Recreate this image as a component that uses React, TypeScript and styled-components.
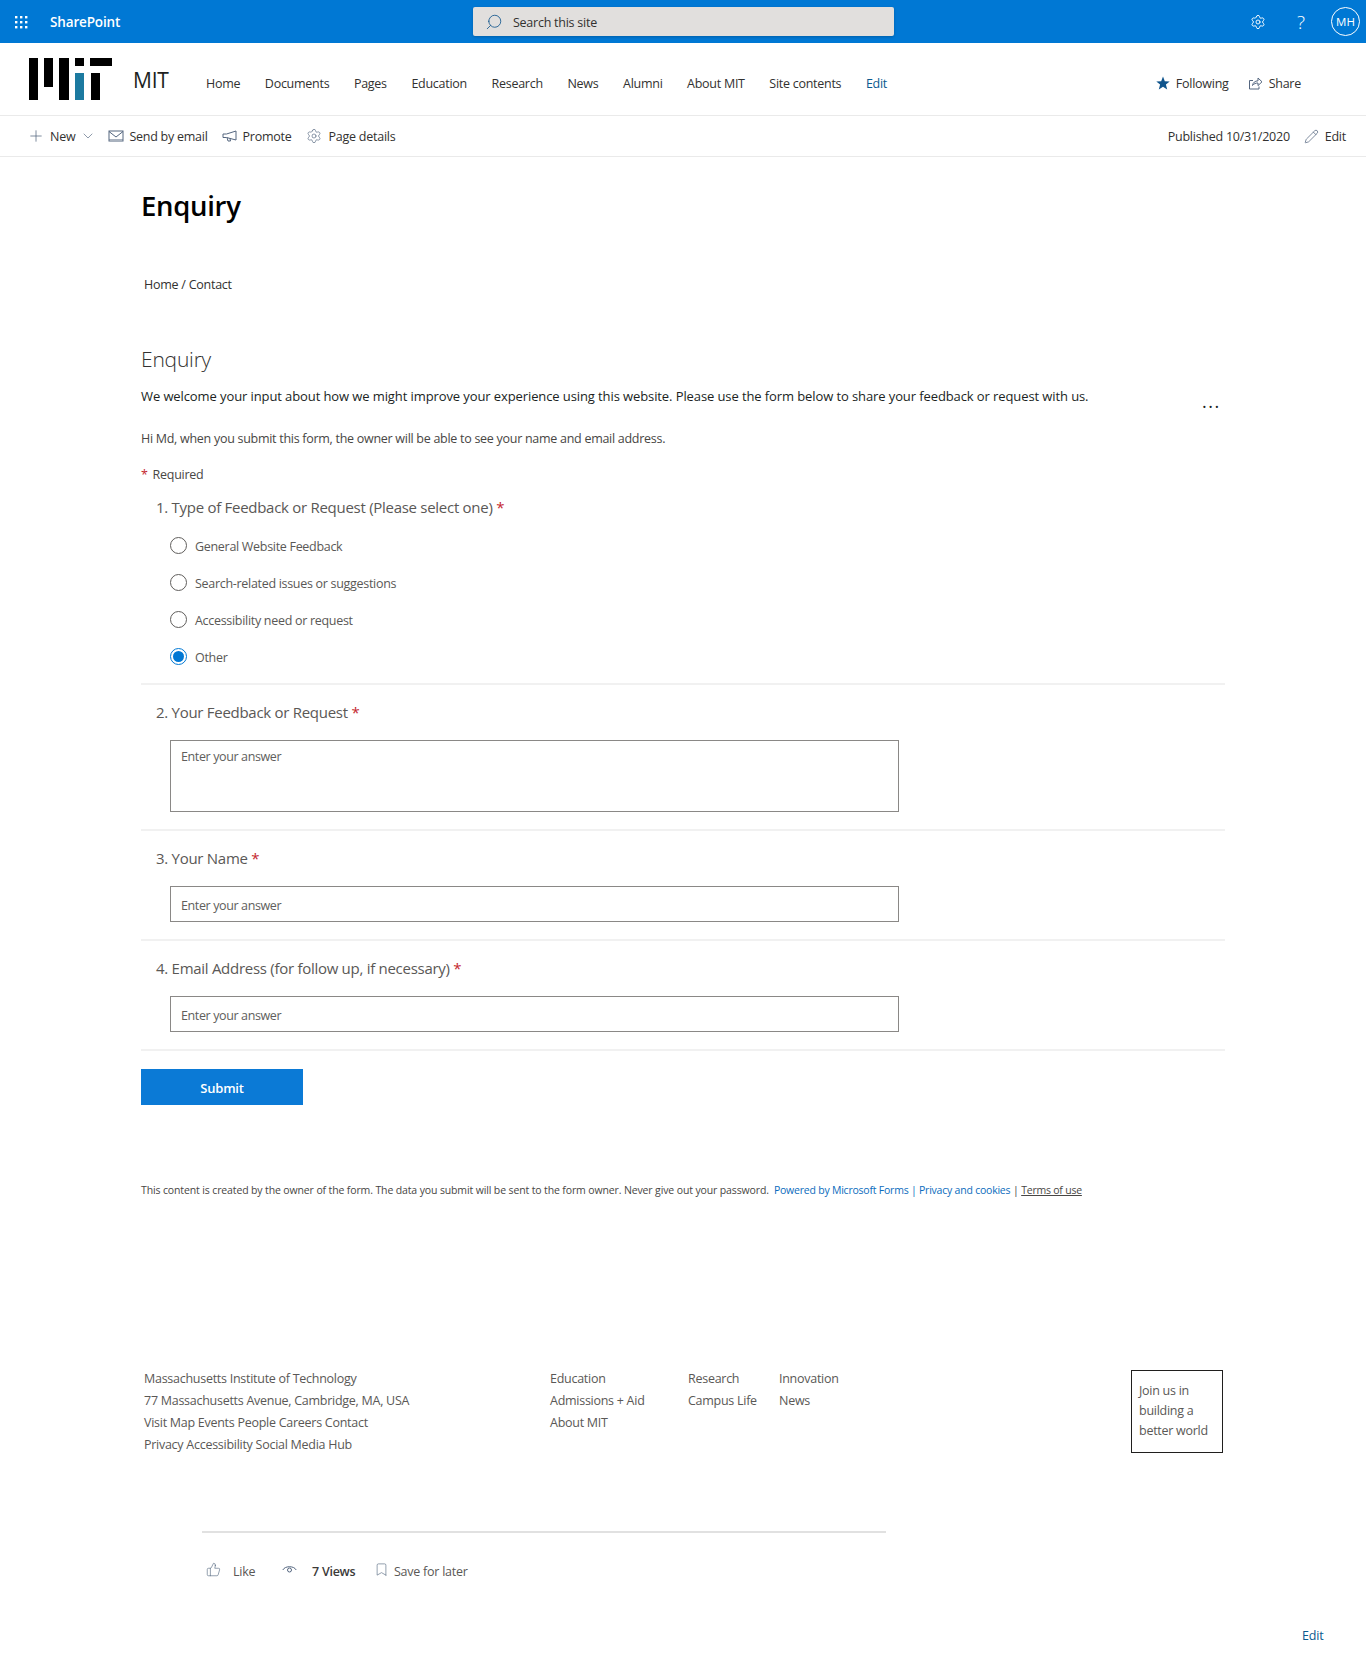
import React from "react";
import styled, { createGlobalStyle } from "styled-components";
import { Bookmark, ChevronDown, Pencil, Plus, Search, Settings, ThumbsUp } from "lucide-react";

const GlobalStyle = createGlobalStyle`
  html, body { margin: 0; padding: 0; background: #fff; }
  body { font-family: "Open Sans", "Noto Sans", sans-serif; color: #323130; font-size: 13px; }
  * { box-sizing: border-box; }
`;

const Page = styled.div`
  width: 1366px;
  height: 1673px;
  overflow: hidden;
  position: relative;
`;

const TopBar = styled.div`
  height: 43px;
  background: #0078d4;
  display: grid;
  grid-template-columns: 473px 421px 1fr;
  align-items: center;
  color: #fff;
`;

const Brand = styled.div`
  display: flex;
  align-items: center;
  padding-left: 14px;
  gap: 22px;
  font-weight: 600;
  font-size: 13.5px;
  letter-spacing: -0.15px;
`;

const SearchBox = styled.div`
  height: 29px;
  background: #e1dfdd;
  border-radius: 2px;
  box-shadow: 0 1px 3px rgba(0, 0, 0, 0.2);
  display: flex;
  align-items: center;
  padding: 1px 0 0 12px;
  gap: 10px;
  color: #323130;
  font-size: 12.5px;
  letter-spacing: -0.25px;
  svg { transform: scaleX(-1); color: #0f548c; }
`;

const TopIcons = styled.div`
  display: flex;
  justify-content: flex-end;
  align-items: center;
  padding-right: 6px;
`;

const HelpMark = styled.span`
  font-size: 19px;
  font-weight: 300;
  margin-left: 31px;
  width: 34px;
`;

const Avatar = styled.div`
  width: 29px;
  height: 29px;
  border: 1px solid #fff;
  border-radius: 50%;
  display: flex;
  align-items: center;
  justify-content: center;
  font-size: 11.5px;
`;

const SiteHeader = styled.div`
  height: 73px;
  border-bottom: 1px solid #eaeaea;
  display: flex;
  padding-left: 29px;
  padding-right: 65px;
`;

const LogoWrap = styled.div`
  padding-top: 15px;
`;

const SiteName = styled.div`
  font-size: 21px;
  color: #201f1e;
  margin-left: 21px;
  padding-top: 23px;
  width: 73px;
  letter-spacing: -0.2px;
`;

const Nav = styled.nav`
  display: flex;
  gap: 24.6px;
  padding-top: 31px;
  flex: 1;
  font-size: 12.5px;
  letter-spacing: -0.27px;
`;

const NavLink = styled.span<{ $accent?: boolean }>`
  color: ${(p) => (p.$accent ? "#0b5a8f" : "#323130")};
  line-height: 20px;
  white-space: nowrap;
`;

const HeaderActions = styled.div`
  display: flex;
  gap: 19px;
  padding-top: 30px;
  font-size: 12.5px;
  letter-spacing: -0.25px;
`;

const Action = styled.span`
  display: flex;
  align-items: center;
  gap: 6px;
  height: 20px;
  white-space: nowrap;
  svg { color: #0f548c; }
`;

const CommandBar = styled.div`
  height: 41px;
  border-bottom: 1px solid #eaeaea;
  display: flex;
  align-items: center;
  justify-content: space-between;
  padding: 0 20px 0 27px;
  font-size: 12.5px;
  letter-spacing: -0.25px;
`;

const CommandGroup = styled.div`
  display: flex;
  align-items: center;
  gap: 14px;
`;

const Command = styled.span<{ $gap?: number }>`
  display: flex;
  align-items: center;
  gap: ${(p) => p.$gap ?? 5}px;
  white-space: nowrap;
  svg { color: #54667f; }
`;

const NewChevron = styled(ChevronDown)`
  margin-right: -2px;
`;

const Main = styled.main`
  padding-left: 141px;
  width: 1225px;
`;

const PageTitle = styled.h1`
  margin: 0;
  padding-top: 29px;
  font-size: 27.5px;
  line-height: 40px;
  font-weight: 600;
  color: #000;
  letter-spacing: -0.3px;
`;

const Crumb = styled.div`
  margin: 49px 0 0 3px;
  line-height: 20px;
  font-size: 12.5px;
  letter-spacing: -0.25px;
`;

const FormTitle = styled.h2`
  margin: 48px 0 0;
  font-size: 21px;
  line-height: 32px;
  font-weight: 300;
  color: #323130;
  letter-spacing: -0.2px;
`;

const Intro = styled.p`
  margin: 11px 0 0;
  font-size: 13px;
  line-height: 20px;
  color: #201f1e;
  letter-spacing: -0.1px;
  position: relative;
`;

const More = styled.span`
  position: absolute;
  left: 1061px;
  top: 5px;
  font-size: 18px;
  letter-spacing: 1.5px;
  font-weight: 400;
`;

const Notice = styled.p`
  margin: 23px 0 0;
  font-size: 12.5px;
  line-height: 20px;
  letter-spacing: -0.28px;
  color: #484644;
`;

const RequiredNote = styled.div`
  margin-top: 16px;
  font-size: 12.5px;
  line-height: 20px;
  letter-spacing: -0.28px;
  color: #484644;
  display: flex;
  gap: 5px;
`;

const RedStar = styled.span`
  color: #c4262e;
`;

const Question = styled.section<{ $height: number }>`
  height: ${(p) => p.$height}px;
  border-bottom: 2px solid #f1f1f1;
  padding-left: 15px;
`;

const QuestionTitle = styled.div<{ $top?: number }>`
  padding-top: ${(p) => p.$top ?? 16}px;
  font-size: 15px;
  line-height: 22px;
  color: #5a5856;
  letter-spacing: -0.28px;
`;

const RadioList = styled.div`
  margin: 18px 0 0 14px;
  display: flex;
  flex-direction: column;
  gap: 17px;
`;

const RadioRow = styled.label`
  display: flex;
  align-items: center;
  gap: 8px;
  height: 20px;
  font-size: 12.5px;
  letter-spacing: -0.3px;
  color: #5a5856;
`;

const RadioDot = styled.span<{ $on?: boolean }>`
  width: 17px;
  height: 17px;
  border-radius: 50%;
  border: 1px solid ${(p) => (p.$on ? "#0078d4" : "#605e5c")};
  display: flex;
  align-items: center;
  justify-content: center;
  margin-top: -2px;
  &::after {
    content: "";
    width: 11px;
    height: 11px;
    border-radius: 50%;
    background: ${(p) => (p.$on ? "#0078d4" : "transparent")};
  }
`;

const Field = styled.div<{ $height: number; $top: number }>`
  margin: 17px 0 0 14px;
  width: 729px;
  height: ${(p) => p.$height}px;
  border: 1px solid #8a8886;
  padding: ${(p) => p.$top}px 10px 0;
  color: #605e5c;
  font-size: 12.5px;
  line-height: 16px;
  letter-spacing: -0.38px;
`;

const Submit = styled.button`
  display: block;
  margin-top: 18px;
  width: 162px;
  height: 36px;
  border: none;
  padding: 2px 0 0;
  background: #0b7ad6;
  color: #fff;
  font: 600 13px "Open Sans", sans-serif;
  letter-spacing: -0.2px;
`;

const Disclaimer = styled.div`
  margin-top: 77px;
  font-size: 10.5px;
  line-height: 16px;
  color: #484644;
  letter-spacing: -0.13px;
  white-space: nowrap;
`;

const BlueLink = styled.span`
  color: #0b6cbd;
  letter-spacing: -0.22px;
`;

const TermsLink = styled.span`
  text-decoration: underline;
  letter-spacing: -0.22px;
`;

const FooterGrid = styled.footer`
  margin-top: 170px;
  display: grid;
  grid-template-columns: 406px 138px 91px 1fr;
  padding-left: 3px;
  font-size: 12.5px;
  line-height: 22px;
  letter-spacing: -0.27px;
  color: #5a5856;
  position: relative;
`;

const JoinBox = styled.div`
  position: absolute;
  left: 990px;
  top: 2px;
  width: 92px;
  height: 83px;
  border: 1px solid #201f1e;
  padding: 10px 7px;
  line-height: 20px;
`;

const SocialBar = styled.div`
  margin: 75px 0 0 61px;
  width: 684px;
  border-top: 2px solid #e1e1e1;
  padding: 29px 0 0 4px;
  display: flex;
  align-items: center;
  font-size: 12.5px;
  letter-spacing: -0.25px;
  line-height: 20px;
  color: #5a5856;
`;

const SocialItem = styled.span<{ $width: number; $gap: number }>`
  width: ${(p) => p.$width}px;
  display: flex;
  align-items: center;
  gap: ${(p) => p.$gap}px;
  white-space: nowrap;
  svg { color: #54667f; margin-top: -5px; }
`;

const ViewCount = styled.span`
  color: #3b3a39;
  font-weight: 600;
`;

const PageEdit = styled.div`
  margin: 44px 0 0 1161px;
  color: #0b5a8f;
  font-size: 12.5px;
  line-height: 20px;
  letter-spacing: -0.2px;
  white-space: nowrap;
`;

const Waffle = () => (
  <svg width="14" height="14" viewBox="0 0 14 14" fill="#fff">
    {[1, 6, 11].flatMap((y) =>
      [1, 6, 11].map((x) => <rect key={`${x}-${y}`} x={x} y={y} width="2.4" height="2.4" />)
    )}
  </svg>
);

const MitLogo = () => (
  <svg width="83" height="43" viewBox="0 0 83 43" fill="#000" style={{ display: "block" }}>
    <rect x="0" y="0" width="9" height="42" />
    <rect x="15" y="0" width="9" height="29" />
    <rect x="30" y="0" width="10" height="42" />
    <rect x="46" y="0" width="9" height="8" />
    <rect x="46" y="15" width="9" height="27" fill="#1c7aa0" />
    <rect x="61" y="0" width="22" height="8" />
    <rect x="62" y="15" width="9" height="27" />
  </svg>
);

const MailIcon = () => (
  <svg width="16" height="16" viewBox="0 0 16 16" fill="none" stroke="#54667f">
    <rect x="1" y="3" width="14" height="10" />
    <path d="M1 3.5 8 9l7-5.5" />
    <path d="M1 11.5h14" strokeOpacity="0.5" />
  </svg>
);

const MegaphoneIcon = () => (
  <svg width="16" height="16" viewBox="0 0 16 16" fill="none" stroke="#54667f" strokeLinejoin="round">
    <path d="M1 6h3.5L14 3v9L4.5 9.5H1z" />
    <path d="M5 9.6 6 13h2.5L8 10.5" />
  </svg>
);

const StarIcon = () => (
  <svg width="14" height="14" viewBox="0 0 14 14" fill="#0f548c">
    <path d="M7 .6 8.8 5.2l4.9.3-3.8 3.1 1.3 4.8L7 10.7l-4.2 2.7 1.3-4.8L.3 5.500l4.900-.3z" />
  </svg>
);

const ShareIcon = () => (
  <svg width="15" height="15" viewBox="0 0 15 15" fill="none" stroke="#54667f" strokeLinejoin="round">
    <path d="M5 4.5H1.500v8.500H11v-2.500" />
    <path d="M4.500 9.500c.3-2.800 2.500-4.600 5.500-4.700V2l4 3.800-4 3.800V7c-2.300 0-4 .7-5.500 2.500z" />
  </svg>
);

const ViewsIcon = () => (
  <svg width="15" height="15" viewBox="0 0 15 15" fill="none" stroke="#54667f">
    <path d="M.8 8C3 3.600 12 3.600 14.200 8" />
    <circle cx="7.500" cy="8" r="2" />
  </svg>
);

const navItems = ["Home", "Documents", "Pages", "Education", "Research", "News", "Alumni", "About MIT", "Site contents"];
const options = ["General Website Feedback", "Search-related issues or suggestions", "Accessibility need or request", "Other"];

export default function App() {
  return (
    <Page>
      <GlobalStyle />
      <TopBar>
        <Brand>
          <Waffle />
          SharePoint
        </Brand>
        <SearchBox>
          <Search size={18} strokeWidth={1.1} />
          Search this site
        </SearchBox>
        <TopIcons>
          <Settings size={16} strokeWidth={1.4} />
          <HelpMark>?</HelpMark>
          <Avatar>MH</Avatar>
        </TopIcons>
      </TopBar>

      <SiteHeader>
        <LogoWrap>
          <MitLogo />
        </LogoWrap>
        <SiteName>MIT</SiteName>
        <Nav>
          {navItems.map((n) => (
            <NavLink key={n}>{n}</NavLink>
          ))}
          <NavLink $accent>Edit</NavLink>
        </Nav>
        <HeaderActions>
          <Action>
            <StarIcon />
            Following
          </Action>
          <Action>
            <ShareIcon />
            Share
          </Action>
        </HeaderActions>
      </SiteHeader>

      <CommandBar>
        <CommandGroup>
          <Command>
            <Plus size={18} strokeWidth={1} />
            New
            <NewChevron size={16} strokeWidth={1} />
          </Command>
          <Command>
            <MailIcon />
            Send by email
          </Command>
          <Command>
            <MegaphoneIcon />
            Promote
          </Command>
          <Command $gap={7}>
            <Settings size={16} strokeWidth={1} />
            Page details
          </Command>
        </CommandGroup>
        <CommandGroup>
          <span>Published 10/31/2020</span>
          <Command $gap={6}>
            <Pencil size={15} strokeWidth={1.2} />
            Edit
          </Command>
        </CommandGroup>
      </CommandBar>

      <Main>
        <PageTitle>Enquiry</PageTitle>
        <Crumb>Home / Contact</Crumb>
        <FormTitle>Enquiry</FormTitle>
        <Intro>
          We welcome your input about how we might improve your experience using this website. Please use the form below to share your feedback or request with us.
          <More>...</More>
        </Intro>
        <Notice>Hi Md, when you submit this form, the owner will be able to see your name and email address.</Notice>
        <RequiredNote>
          <RedStar>*</RedStar> Required
        </RequiredNote>

        <Question $height={200}>
          <QuestionTitle $top={11}>
            1. Type of Feedback or Request (Please select one) <RedStar>*</RedStar>
          </QuestionTitle>
          <RadioList>
            {options.map((o) => (
              <RadioRow key={o}>
                <RadioDot $on={o === "Other"} />
                {o}
              </RadioRow>
            ))}
          </RadioList>
        </Question>

        <Question $height={146}>
          <QuestionTitle>
            2. Your Feedback or Request <RedStar>*</RedStar>
          </QuestionTitle>
          <Field $height={72} $top={8}>Enter your answer</Field>
        </Question>

        <Question $height={110}>
          <QuestionTitle>
            3. Your Name <RedStar>*</RedStar>
          </QuestionTitle>
          <Field $height={36} $top={11}>Enter your answer</Field>
        </Question>

        <Question $height={110}>
          <QuestionTitle>
            4. Email Address (for follow up, if necessary) <RedStar>*</RedStar>
          </QuestionTitle>
          <Field $height={36} $top={11}>Enter your answer</Field>
        </Question>

        <Submit>Submit</Submit>

        <Disclaimer>
          This content is created by the owner of the form. The data you submit will be sent to the form owner. Never give out your password.{"  "}
          <BlueLink>&nbsp;Powered by Microsoft Forms | Privacy and cookies</BlueLink> | <TermsLink>Terms of use</TermsLink>
        </Disclaimer>

        <FooterGrid>
          <div>
            <div>Massachusetts Institute of Technology</div>
            <div>77 Massachusetts Avenue, Cambridge, MA, USA</div>
            <div>Visit Map Events People Careers Contact</div>
            <div>Privacy Accessibility Social Media Hub</div>
          </div>
          <div>
            <div>Education</div>
            <div>Admissions + Aid</div>
            <div>About MIT</div>
          </div>
          <div>
            <div>Research</div>
            <div>Campus Life</div>
          </div>
          <div>
            <div>Innovation</div>
            <div>News</div>
          </div>
          <JoinBox>
            Join us in
            <br />
            building a
            <br />
            better world
          </JoinBox>
        </FooterGrid>

        <SocialBar>
          <SocialItem $width={76} $gap={12}>
            <ThumbsUp size={15} strokeWidth={1} />
            Like
          </SocialItem>
          <SocialItem $width={92} $gap={15}>
            <ViewsIcon />
            <ViewCount>7 Views</ViewCount>
          </SocialItem>
          <SocialItem $width={110} $gap={5}>
            <Bookmark size={15} strokeWidth={1} />
            Save for later
          </SocialItem>
        </SocialBar>

        <PageEdit>Edit</PageEdit>
      </Main>
    </Page>
  );
}
